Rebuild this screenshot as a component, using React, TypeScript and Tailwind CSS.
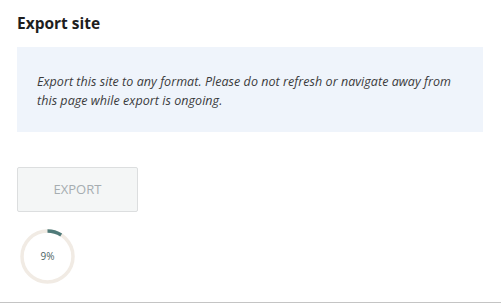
import React from "react";

function Ring({ pct }: { pct: number }) {
  const r = 25.5;
  const c = 2 * Math.PI * r;
  return (
    <div className="relative w-[55px] h-[55px]">
      <svg width="55" height="55" viewBox="0 0 55 55" className="absolute inset-0">
        <circle cx="27.5" cy="27.5" r={r} fill="none" stroke="#f1ebe4" strokeWidth="3.5" />
        <circle
          cx="27.5"
          cy="27.5"
          r={r}
          fill="none"
          stroke="#4f7a79"
          strokeWidth="3.5"
          strokeDasharray={`${(c * pct) / 100} ${c}`}
          transform="rotate(-90 27.5 27.5)"
        />
      </svg>
      <div className="absolute inset-0 flex items-center justify-center text-[10px] text-[#4c6464]">
        {pct}%
      </div>
    </div>
  );
}

export default function App() {
  return (
    <div
      className="w-[501px] h-[303px] bg-white border-b border-[#c4c4c4] flex flex-col px-[17px]"
      style={{ fontFamily: '"Open Sans", "Noto Sans", sans-serif' }}
    >
      <h1 className="mt-[12px] text-[15.5px] font-bold text-[#1e1e1e] leading-[22px]">Export site</h1>
      <div className="mt-[13px] w-[466px] h-[85px] bg-[#eff4fb] pl-[20px] pr-[10px] pt-[25px]">
        <p className="italic text-[12.5px] tracking-[0.05px] leading-[19px] text-[#3b3b3b]">
          Export this site to any format. Please do not refresh or navigate away from this page while export is ongoing.
        </p>
      </div>
      <button className="mt-[35px] w-[121px] h-[45px] bg-[#f4f6f6] border border-[#dcdedf] rounded-[2px] text-[13px] text-[#a6adb1] flex items-center justify-center">
        EXPORT
      </button>
      <div className="mt-[17px] ml-[3px]">
        <Ring pct={9} />
      </div>
    </div>
  );
}
